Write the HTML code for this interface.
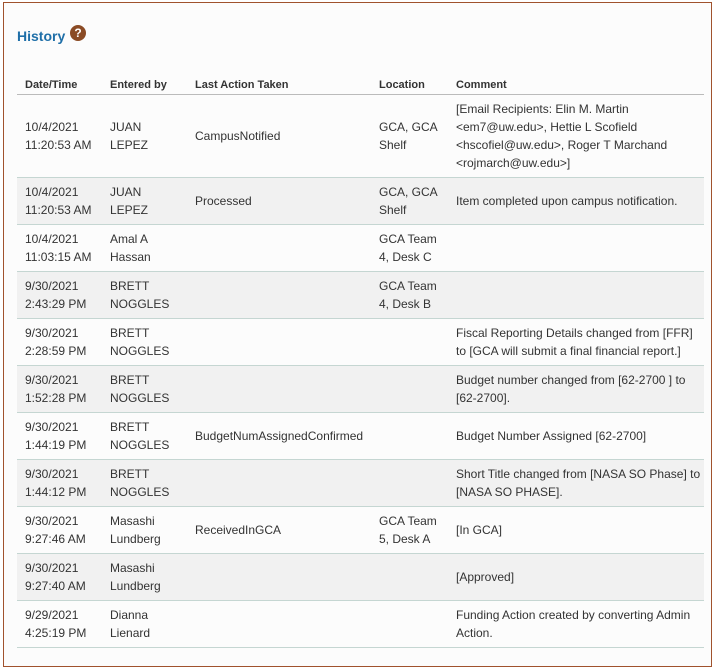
<!DOCTYPE html>
<html><head><style>
html,body{margin:0;padding:0;background:#fff;}
body{width:714px;height:670px;position:relative;font-family:"Liberation Sans",Arial,sans-serif;font-size:12px;color:#333;}
.box{position:absolute;left:3px;top:2px;width:707px;height:663px;border:1px solid #a0522d;background:#fcfcfc;}
h2{position:absolute;left:13px;top:25px;margin:0;font-size:14px;font-weight:bold;color:#1f6fa8;}
.q{position:absolute;left:66px;top:22px;width:16px;height:16px;border-radius:50%;background:#8b4b25;color:#fff;font-size:12px;font-weight:bold;text-align:center;line-height:16px;}
table{position:absolute;left:13px;top:72px;width:687px;border-collapse:collapse;}
th{font-weight:bold;text-align:left;height:19px;padding:0 0 0 8px;border-bottom:1px solid #bbb;vertical-align:middle;color:#333;font-size:11px;}
td{padding:5px 0 5px 8px;line-height:18px;border-bottom:1px solid #c5d6d2;vertical-align:middle;}
tr.s td{background:#f1f1f1;}
tr.r td{height:36px;}
</style></head><body>
<div class="box">
<h2>History</h2><div class="q">?</div>
<table>
<colgroup><col style="width:85px"><col style="width:85px"><col style="width:184px"><col style="width:77px"><col></colgroup>
<tr><th>Date/Time</th><th>Entered by</th><th>Last Action Taken</th><th>Location</th><th>Comment</th></tr>
<tr><td>10/4/2021<br>11:20:53 AM</td><td>JUAN<br>LEPEZ</td><td>CampusNotified</td><td>GCA, GCA<br>Shelf</td><td>[Email Recipients: Elin M. Martin<br>&lt;em7@uw.edu&gt;, Hettie L Scofield<br>&lt;hscofiel@uw.edu&gt;, Roger T Marchand<br>&lt;rojmarch@uw.edu&gt;]</td></tr>
<tr class="s r"><td>10/4/2021<br>11:20:53 AM</td><td>JUAN<br>LEPEZ</td><td>Processed</td><td>GCA, GCA<br>Shelf</td><td>Item completed upon campus notification.</td></tr>
<tr class="r"><td>10/4/2021<br>11:03:15 AM</td><td>Amal A<br>Hassan</td><td></td><td>GCA Team<br>4, Desk C</td><td></td></tr>
<tr class="s r"><td>9/30/2021<br>2:43:29 PM</td><td>BRETT<br>NOGGLES</td><td></td><td>GCA Team<br>4, Desk B</td><td></td></tr>
<tr class="r"><td>9/30/2021<br>2:28:59 PM</td><td>BRETT<br>NOGGLES</td><td></td><td></td><td>Fiscal Reporting Details changed from [FFR]<br>to [GCA will submit a final financial report.]</td></tr>
<tr class="s r"><td>9/30/2021<br>1:52:28 PM</td><td>BRETT<br>NOGGLES</td><td></td><td></td><td>Budget number changed from [62-2700 ] to<br>[62-2700].</td></tr>
<tr class="r"><td>9/30/2021<br>1:44:19 PM</td><td>BRETT<br>NOGGLES</td><td>BudgetNumAssignedConfirmed</td><td></td><td>Budget Number Assigned [62-2700]</td></tr>
<tr class="s r"><td>9/30/2021<br>1:44:12 PM</td><td>BRETT<br>NOGGLES</td><td></td><td></td><td>Short Title changed from [NASA SO Phase] to<br>[NASA SO PHASE].</td></tr>
<tr class="r"><td>9/30/2021<br>9:27:46 AM</td><td>Masashi<br>Lundberg</td><td>ReceivedInGCA</td><td>GCA Team<br>5, Desk A</td><td>[In GCA]</td></tr>
<tr class="s r"><td>9/30/2021<br>9:27:40 AM</td><td>Masashi<br>Lundberg</td><td></td><td></td><td>[Approved]</td></tr>
<tr class="r"><td>9/29/2021<br>4:25:19 PM</td><td>Dianna<br>Lienard</td><td></td><td></td><td>Funding Action created by converting Admin<br>Action.</td></tr>
</table>
</div>
</body></html>
